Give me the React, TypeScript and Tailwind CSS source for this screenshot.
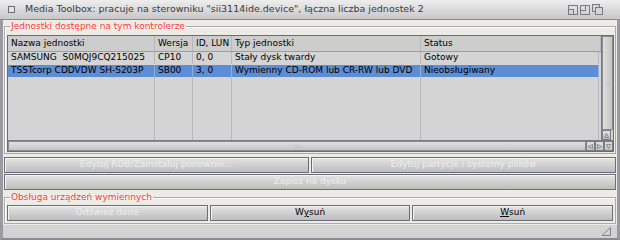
import { ReactNode } from "react";

const font = { fontFamily: '"DejaVu Sans", Verdana, sans-serif' };

// obrys przycisku w stylu Amigi / Reaction
const Btn = ({ label, disabled, u, className }: { label: string; disabled?: boolean; u?: number; className?: string }) => {
    const chars =
        u === undefined
            ? label
            : [label.slice(0, u), <span key="u" className="underline">{label[u]}</span>, label.slice(u + 1)];
    return (
        <div
            className={
                "flex h-[16px] items-center justify-center border border-[#6e6e78] bg-gradient-to-b from-[#e4e4e4] to-[#bdbdbd] shadow-[inset_1px_1px_0_#f4f4f4] " +
                (disabled ? "text-[#ededed]" : "text-black") +
                " " +
                (className ?? "")
            }
        >
            <span>{chars}</span>
        </div>
    );
};

const Group = ({ title, children, className }: { title: string; children: ReactNode; className?: string }) => (
    <fieldset className={"border border-[#a9a9ae] shadow-[inset_1px_1px_0_#ffffff] " + (className ?? "")}>
        <legend className="ml-[3px] px-[1px] leading-[11px] text-[#ff3b3b]">{title}</legend>
        {children}
    </fieldset>
);

const Arrow = ({ dir }: { dir: "up" | "down" | "left" | "right" }) => {
    const pts = {
        up: "2,8 5,2 8,8",
        down: "2,2 5,8 8,2",
        left: "8,2 2,5 8,8",
        right: "2,2 8,5 2,8",
    }[dir];
    return (
        <div className="flex h-[10px] w-[9px] items-center justify-center border border-[#7a7a82] bg-gradient-to-b from-[#e2e2e2] to-[#c4c4c4]">
            <svg width="9" height="9" viewBox="0 0 10 10">
                <polygon points={pts} fill="none" stroke="#6a6a72" strokeWidth="1" />
            </svg>
        </div>
    );
};

const cols = [
    { w: "w-[147px]", h: "Nazwa jednostki" },
    { w: "w-[38px]", h: "Wersja" },
    { w: "w-[39px]", h: "ID, LUN" },
    { w: "w-[189px]", h: "Typ jednostki" },
    { w: "flex-1", h: "Status" },
];

const rows = [
    ["SAMSUNG  S0MQJ9CQ215025", "CP10", "0, 0", "Stały dysk twardy", "Gotowy"],
    ["TSSTcorp CDDVDW SH-S203P", "SB00", "3, 0", "Wymienny CD-ROM lub CR-RW lub DVD", "Nieobsługiwany"],
];

const TitleGadgets = () => (
    <div className="flex items-center gap-[2px] pr-[17px]">
        <svg width="10" height="10" viewBox="0 0 10 10">
            <rect x="0.5" y="0.5" width="9" height="9" fill="none" stroke="#7a7a80" />
            <rect x="0.5" y="4.5" width="5" height="5" fill="none" stroke="#7a7a80" />
        </svg>
        <svg width="10" height="10" viewBox="0 0 10 10">
            <rect x="0.5" y="0.5" width="9" height="9" fill="none" stroke="#7a7a80" />
            <rect x="0.5" y="0.5" width="5" height="5" fill="none" stroke="#7a7a80" />
        </svg>
        <svg width="11" height="11" viewBox="0 0 11 11">
            <rect x="0.5" y="0.5" width="7" height="7" fill="#d6d6d6" stroke="#7a7a80" />
            <rect x="3.5" y="3.5" width="7" height="7" fill="#d6d6d6" stroke="#7a7a80" />
        </svg>
    </div>
);

export default function App() {
    return (
        <div style={font} className="flex h-[240px] w-[620px] flex-col bg-[#cfcfcf] text-[9px] text-black">
            {/* pasek tytułu */}
            <div className="flex h-[20px] items-center border-b border-[#8a8a90] bg-gradient-to-b from-[#eeeeee] to-[#c8c8c8]">
                <div className="ml-[8px] h-[7px] w-[7px] border border-[#6e6e74] bg-[#e4e4e4]" />
                <span className="ml-[10px] flex-1 whitespace-nowrap text-[9.5px] text-[#3a3a3a]">
                    Media Toolbox: pracuje na sterowniku "sii3114ide.device", łączna liczba jednostek 2
                </span>
                <TitleGadgets />
            </div>

            {/* zawartość okna */}
            <div className="flex flex-1 flex-col border-x-[3px] border-x-[#9a9aa0] bg-[#ecebe6] pl-[1px] pr-[1px]">
                <Group title="Jednostki dostępne na tym kontrolerze" className="mt-[1px] pb-[1px] pl-[2px] pr-[1px] pt-[3px]">
                    <div className="flex h-[117px] flex-col border border-[#6c6c76] bg-[#d4d4d4]">
                        <div className="flex flex-1">
                            <div className="flex flex-1 flex-col">
                                <div className="flex h-[16px] border-b border-[#9c9ca4] bg-[#cdcdcd]">
                                    {cols.map((c, i) => (
                                        <div key={i} className={c.w + " flex items-center border-r border-[#b8b8bc] pl-[3px]"}>
                                            {c.h}
                                        </div>
                                    ))}
                                </div>
                                <div className="flex flex-1 flex-col">
                                    {rows.map((r, ri) => (
                                        <div key={ri} className={"flex h-[12px] mr-[2px] " + (ri === 1 ? "mt-px bg-[#5d8dd5]" : "")}>
                                            {r.map((cell, ci) => (
                                                <div
                                                    key={ci}
                                                    className={cols[ci].w + " flex items-center whitespace-pre border-r pl-[3px] " + (ri === 1 ? "border-[#8fb0e0]" : "border-[#b8b8bc]")}
                                                >
                                                    {cell}
                                                </div>
                                            ))}
                                        </div>
                                    ))}
                                    <div className="mr-[2px] flex flex-1">
                                        {cols.map((c, i) => (
                                            <div key={i} className={c.w + " border-r border-[#b8b8bc]"} />
                                        ))}
                                    </div>
                                </div>
                            </div>
                            {/* pionowy pasek przewijania */}
                            <div className="flex w-[12px] flex-col border-l border-[#7a7a82]">
                                <div className="flex flex-1 items-center justify-center border border-[#8a8a92] bg-gradient-to-r from-[#dedede] to-[#c4c4c4]">
                                    <span className="text-[6px] leading-none text-[#a0a0a6]">::</span>
                                </div>
                                <Arrow dir="up" />
                            </div>
                        </div>
                        {/* poziomy pasek przewijania */}
                        <div className="flex h-[11px] border-t border-[#7a7a82]">
                            <div className="flex flex-1 items-center justify-center border border-[#8a8a92] bg-gradient-to-b from-[#e0e0e0] to-[#c4c4c4]">
                                <span className="text-[6px] leading-none text-[#a0a0a6]">:::</span>
                            </div>
                            <Arrow dir="left" />
                            <Arrow dir="right" />
                            <Arrow dir="down" />
                        </div>
                    </div>
                </Group>

                <div className="mt-[3px] flex gap-[2px]">
                    <Btn label="Edytuj RDB/Zainstaluj ponownie..." disabled className="flex-1" />
                    <Btn label="Edytuj partycje i systemy plików" disabled className="flex-1" />
                </div>
                <Btn label="Zapisz na dysku" disabled className="mt-px" />

                <Group title="Obsługa urządzeń wymiennych" className="mt-[2px] flex-1 px-[2px] pt-[2px]">
                    <div className="flex gap-[2px]">
                        <Btn label="Odśwież dane" disabled className="flex-1" />
                        <Btn label="Wysuń" u={1} className="flex-1" />
                        <Btn label="Wsuń" u={0} className="flex-1" />
                    </div>
                </Group>
                <div className="h-px" />
            </div>

            {/* pasek stanu */}
            <div className="flex h-[15px] items-end justify-end border-x-[3px] border-b-[2px] border-x-[#9a9aa0] border-b-[#8a8a90] bg-[#d3d3d3] pb-[2px] pr-[6px]">
                <svg width="10" height="9" viewBox="0 0 10 9">
                    <polygon points="1,8.5 9.5,8.5 9.5,0.5" fill="none" stroke="#808088" />
                </svg>
            </div>
        </div>
    );
}
